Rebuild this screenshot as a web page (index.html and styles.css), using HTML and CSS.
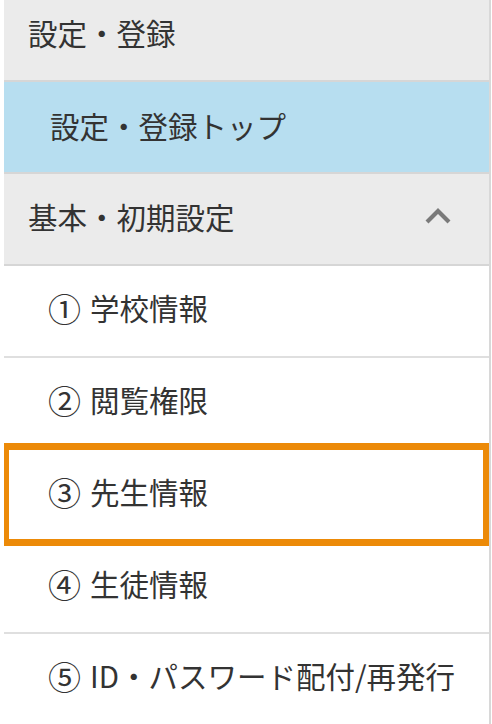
FILE: index.html
```html
<!DOCTYPE html>
<html lang="ja">
<head>
<meta charset="utf-8">
<title>設定・登録</title>
<link rel="stylesheet" href="styles.css">
</head>
<body>
<nav class="side-menu">
  <div class="menu-head menu-head--top">設定・登録</div>
  <a class="menu-link menu-link--current">設定・登録トップ</a>
  <div class="menu-head menu-head--group">
    <span>基本・初期設定</span>
    <svg class="chevron" width="26" height="16" viewBox="0 0 26 16" aria-hidden="true">
      <polyline points="2,14 13,3 24,14" fill="none" stroke="#7a7a7a" stroke-width="4.2" stroke-linejoin="miter"/>
    </svg>
  </div>
  <a class="menu-item"><span class="num">①</span>学校情報</a>
  <a class="menu-item"><span class="num">②</span>閲覧権限</a>
  <a class="menu-item menu-item--focus"><span class="num">③</span>先生情報</a>
  <a class="menu-item"><span class="num">④</span>生徒情報</a>
  <a class="menu-item menu-item--last"><span class="num">⑤</span>ID・パスワード配付/再発行</a>
</nav>
</body>
</html>
```
FILE: styles.css
```css
html, body {
  margin: 0;
  padding: 0;
  background: #ffffff;
}

body {
  font-family: "Noto Sans CJK JP", "Noto Sans", sans-serif;
  font-weight: 400;
  color: #333333;
}

.side-menu {
  margin-left: 4px;
  width: 485px;
  height: 724px;
  border-right: 2px solid #d8d8d8;
  display: flex;
  flex-direction: column;
  overflow: hidden;
}

.menu-head,
.menu-link,
.menu-item {
  display: flex;
  align-items: center;
  height: 90px;
  flex: none;
  font-size: 29.5px;
  line-height: 1;
  text-decoration: none;
  color: #333333;
  box-sizing: border-box;
}

.menu-head {
  background: #ebebeb;
  border-bottom: 2px solid #d6d6d6;
  padding-left: 24px;
  padding-bottom: 4px;
  height: 92px;
}

.menu-head--top {
  height: 82px;
  padding-bottom: 14px;
}

.menu-head--group {
  justify-content: space-between;
  padding-right: 38px;
}

.chevron {
  display: block;
  margin-top: -2px;
}

.menu-link--current {
  background: #b7def0;
  border-bottom: 2px solid #d6d6d6;
  padding-left: 46px;
  padding-bottom: 2px;
  height: 92px;
}

.menu-item {
  background: #ffffff;
  border-bottom: 2px solid #dfdfdf;
  padding-left: 44px;
  padding-bottom: 6px;
  height: 92px;
}

.menu-item--last {
  border-bottom: none;
  height: 90px;
}

.num {
  font-size: 33px;
  margin-right: 9px;
}

.menu-item--focus {
  position: relative;
}

/* orange frame drawn over the current step */
.menu-item--focus::after {
  content: "";
  position: absolute;
  top: -7px;
  bottom: -6px;
  left: -2px;
  right: -1px;
  border: 7px solid #ec8a08;
  pointer-events: none;
}
```
